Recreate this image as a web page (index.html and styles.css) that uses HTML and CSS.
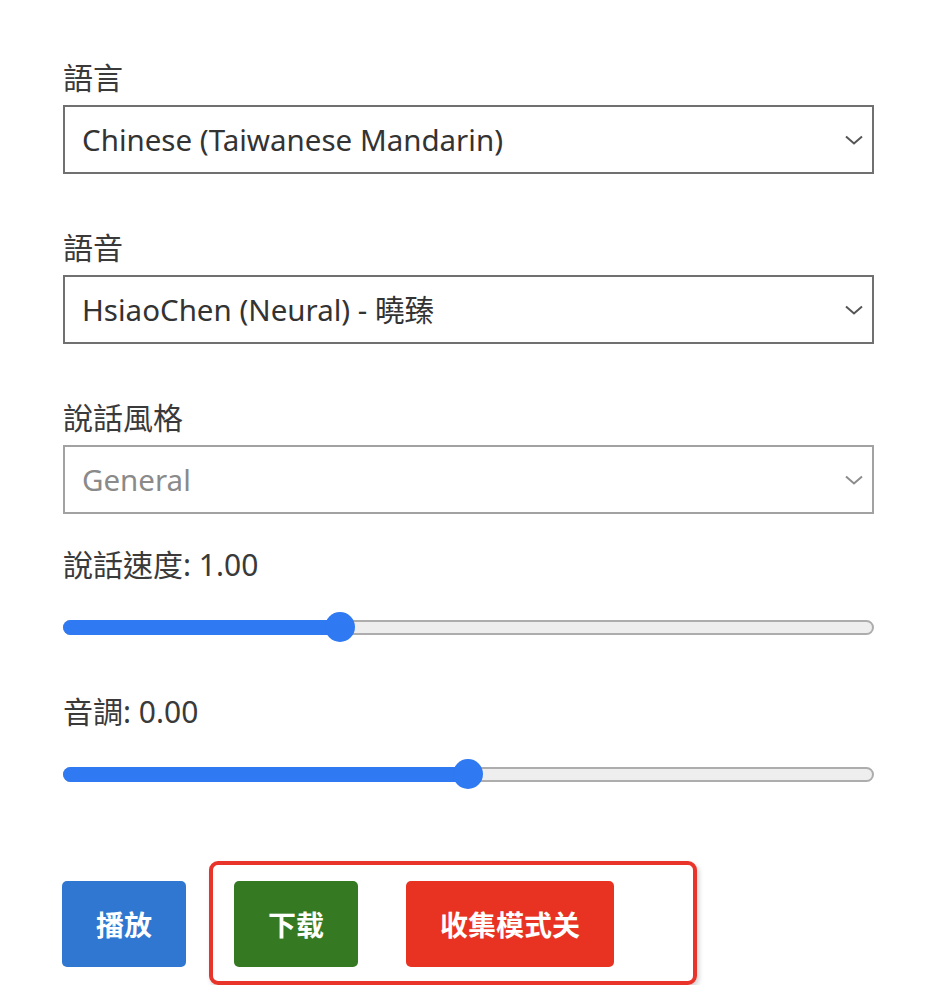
FILE: index.html
```html
<!DOCTYPE html>
<html lang="zh-Hant">
<head>
<meta charset="utf-8">
<title>TTS</title>
<link rel="stylesheet" href="styles.css">
</head>
<body>
<div class="form">
  <div class="field">
    <label class="label">語言</label>
    <div class="select">
      <span class="select-text">Chinese (Taiwanese Mandarin)</span>
      <svg class="chev" width="18" height="10" viewBox="0 0 18 10"><path d="M1 1.5 L9 8.5 L17 1.5" fill="none" stroke="currentColor" stroke-width="2"/></svg>
    </div>
  </div>
  <div class="field">
    <label class="label">語音</label>
    <div class="select">
      <span class="select-text">HsiaoChen (Neural) - 曉臻</span>
      <svg class="chev" width="18" height="10" viewBox="0 0 18 10"><path d="M1 1.5 L9 8.5 L17 1.5" fill="none" stroke="currentColor" stroke-width="2"/></svg>
    </div>
  </div>
  <div class="field">
    <label class="label">說話風格</label>
    <div class="select disabled">
      <span class="select-text">General</span>
      <svg class="chev" width="18" height="10" viewBox="0 0 18 10"><path d="M1 1.5 L9 8.5 L17 1.5" fill="none" stroke="currentColor" stroke-width="2"/></svg>
    </div>
  </div>
  <div class="field slider-field">
    <label class="label">說話速度: 1.00</label>
    <div class="slider">
      <div class="track"><div class="fill" style="width: 277px"></div></div>
      <div class="thumb" style="left: 262px"></div>
    </div>
  </div>
  <div class="field slider-field">
    <label class="label">音調: 0.00</label>
    <div class="slider">
      <div class="track"><div class="fill" style="width: 405px"></div></div>
      <div class="thumb" style="left: 390px"></div>
    </div>
  </div>
  <div class="buttons">
    <button class="btn blue">播放</button>
    <div class="highlight">
      <button class="btn green">下载</button>
      <button class="btn red wide">收集模式关</button>
    </div>
  </div>
</div>
</body>
</html>
```

FILE: styles.css
```css
html, body {
  margin: 0;
  padding: 0;
  background: #ffffff;
}
body {
  font-family: "Noto Sans", "Noto Sans CJK TC", sans-serif;
  color: #333333;
}
.form {
  width: 811px;
  padding: 58px 0 0 63px;
  display: flex;
  flex-direction: column;
}
.field {
  display: flex;
  flex-direction: column;
}
.field + .field {
  margin-top: 54px;
}
.label {
  font-size: 30px;
  line-height: 39px;
  height: 39px;
  color: #3a3a3a;
  margin-bottom: 8px;
}
.select {
  box-sizing: border-box;
  height: 69px;
  border: 2px solid #707070;
  display: flex;
  align-items: center;
  justify-content: space-between;
  padding: 0 9px 0 17px;
  color: #333333;
}
.select-text {
  font-size: 29.5px;
  line-height: 1;
  font-family: "Noto Sans", "Noto Sans CJK TC", sans-serif;
}
.chev {
  color: #555555;
}
.select.disabled {
  border-color: #a2a2a2;
  color: #8a8a8a;
}
.select.disabled .chev {
  color: #8c8c8c;
}
.field.slider-field {
  margin-top: 31px;
}
.field.slider-field + .field.slider-field {
  margin-top: 50px;
}
.slider {
  position: relative;
  height: 30px;
  margin-top: 20px;
  display: flex;
  align-items: center;
}
.track {
  box-sizing: border-box;
  width: 100%;
  height: 15px;
  border: 2px solid #adadad;
  border-radius: 8px;
  background: #eeeeee;
  position: relative;
  overflow: visible;
}
.fill {
  position: absolute;
  left: -2px;
  top: -2px;
  height: 15px;
  background: #2f79f3;
  border-radius: 8px 0 0 8px;
}
.thumb {
  position: absolute;
  top: 0;
  width: 30px;
  height: 30px;
  border-radius: 50%;
  background: #2f79f3;
}
.buttons {
  display: flex;
  align-items: flex-start;
  margin-top: 72px;
}
.btn {
  border: none;
  border-radius: 5px;
  height: 86px;
  width: 124px;
  font-family: "Noto Sans CJK SC", "Noto Sans CJK TC", sans-serif;
  font-weight: 700;
  font-size: 28px;
  color: #ffffff;
  padding: 0;
  margin: 0;
}
.btn.wide {
  width: 208px;
}
.blue {
  background: #2f77d0;
  margin-top: 20px;
  margin-left: -1px;
}
.green {
  background: #357a22;
}
.red {
  background: #e83323;
}
.highlight {
  margin-left: 23px;
  box-sizing: border-box;
  width: 488px;
  height: 124px;
  border: 4px solid #e8342a;
  border-radius: 9px;
  box-shadow: 2px 3px 5px rgba(0, 0, 0, 0.18);
  padding: 16px 0 0 21px;
  display: flex;
  align-items: flex-start;
  gap: 48px;
}
```
